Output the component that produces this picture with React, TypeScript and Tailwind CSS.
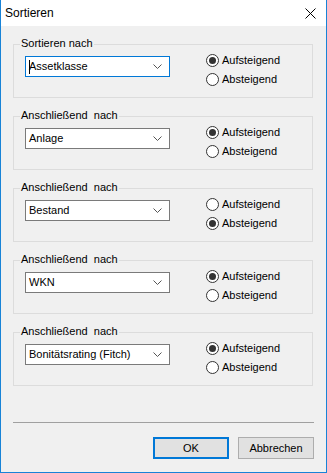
import React from "react";

const groups = [
  { label: "Sortieren nach", value: "Assetklasse", asc: true, focused: true },
  { label: "Anschließend  nach", value: "Anlage", asc: true },
  { label: "Anschließend  nach", value: "Bestand", asc: false },
  { label: "Anschließend  nach", value: "WKN", asc: true },
  { label: "Anschließend  nach", value: "Bonitätsrating (Fitch)", asc: true },
];

function Radio({ checked, label }: { checked: boolean; label: string }) {
  return (
    <div className="flex h-[19px] items-start">
      <div className="mt-0 flex h-[13px] w-[13px] items-center justify-center rounded-full border border-[#333333] bg-white">
        {checked && <div className="h-[7px] w-[7px] rounded-full bg-[#333333]" />}
      </div>
      <span className="ml-[3px] leading-[13px] text-black">{label}</span>
    </div>
  );
}

function Group({
  label,
  value,
  asc,
  focused,
}: {
  label: string;
  value: string;
  asc: boolean;
  focused?: boolean;
}) {
  return (
    <div className="relative flex h-[54px] w-[300px] shrink-0 items-start border border-[#dcdcdc] pl-[11px]">
      <span className="absolute left-[6px] top-[-9px] whitespace-pre bg-[#f0f0f0] px-[1px] leading-[15px] text-black">
        {label}
      </span>
      <div
        className={`relative mt-[11px] flex h-[21px] w-[145px] items-center border bg-white pl-[3px] ${
          focused ? "border-[#0078d7]" : "border-[#7a7a7a]"
        }`}
      >
        {focused && <div className="absolute left-[3px] top-[3px] h-[14px] w-px bg-black" />}
        <span className="flex-1 leading-[15px] text-black">{value}</span>
        <svg width="9" height="5" viewBox="0 0 9 5" className="mr-[7px]">
          <path d="M0.5 0.5 L4.5 4.5 L8.5 0.5" fill="none" stroke="#555555" strokeWidth="1" />
        </svg>
      </div>
      <div className="ml-[36px] mt-[9px] flex flex-col">
        <Radio checked={asc} label="Aufsteigend" />
        <Radio checked={!asc} label="Absteigend" />
      </div>
    </div>
  );
}

export default function App() {
  return (
    <div
      className="flex h-[473px] w-[327px] flex-col border-x border-b border-[#1883d7] bg-[#f0f0f0] text-[11px]"
      style={{ fontFamily: '"Liberation Sans", Arial, sans-serif' }}
    >
      <div className="flex h-[26px] shrink-0 items-center justify-between bg-white pl-[4px] pr-[10px]">
        <span className="text-[12px] text-black">Sortieren</span>
        <svg width="11" height="11" viewBox="0 0 11 11">
          <path d="M0.5 0.5 L10.5 10.5 M10.5 0.5 L0.5 10.5" stroke="#000" strokeWidth="1" />
        </svg>
      </div>
      <div className="flex flex-col gap-[18px] pl-[12px] pt-[18px]">
        {groups.map((g, i) => (
          <Group key={i} {...g} />
        ))}
      </div>
      <div className="ml-[12px] mt-[36px] h-px w-[301px] bg-[#a0a0a0]" />
      <div className="mt-[14px] flex justify-end gap-[9px] pr-[12px]">
        <button className="flex h-[22px] w-[76px] items-center justify-center border-2 border-[#0078d7] bg-[#e1e1e1] text-black">
          OK
        </button>
        <button className="flex h-[22px] w-[76px] items-center justify-center border border-[#adadad] bg-[#e1e1e1] text-black">
          Abbrechen
        </button>
      </div>
    </div>
  );
}
